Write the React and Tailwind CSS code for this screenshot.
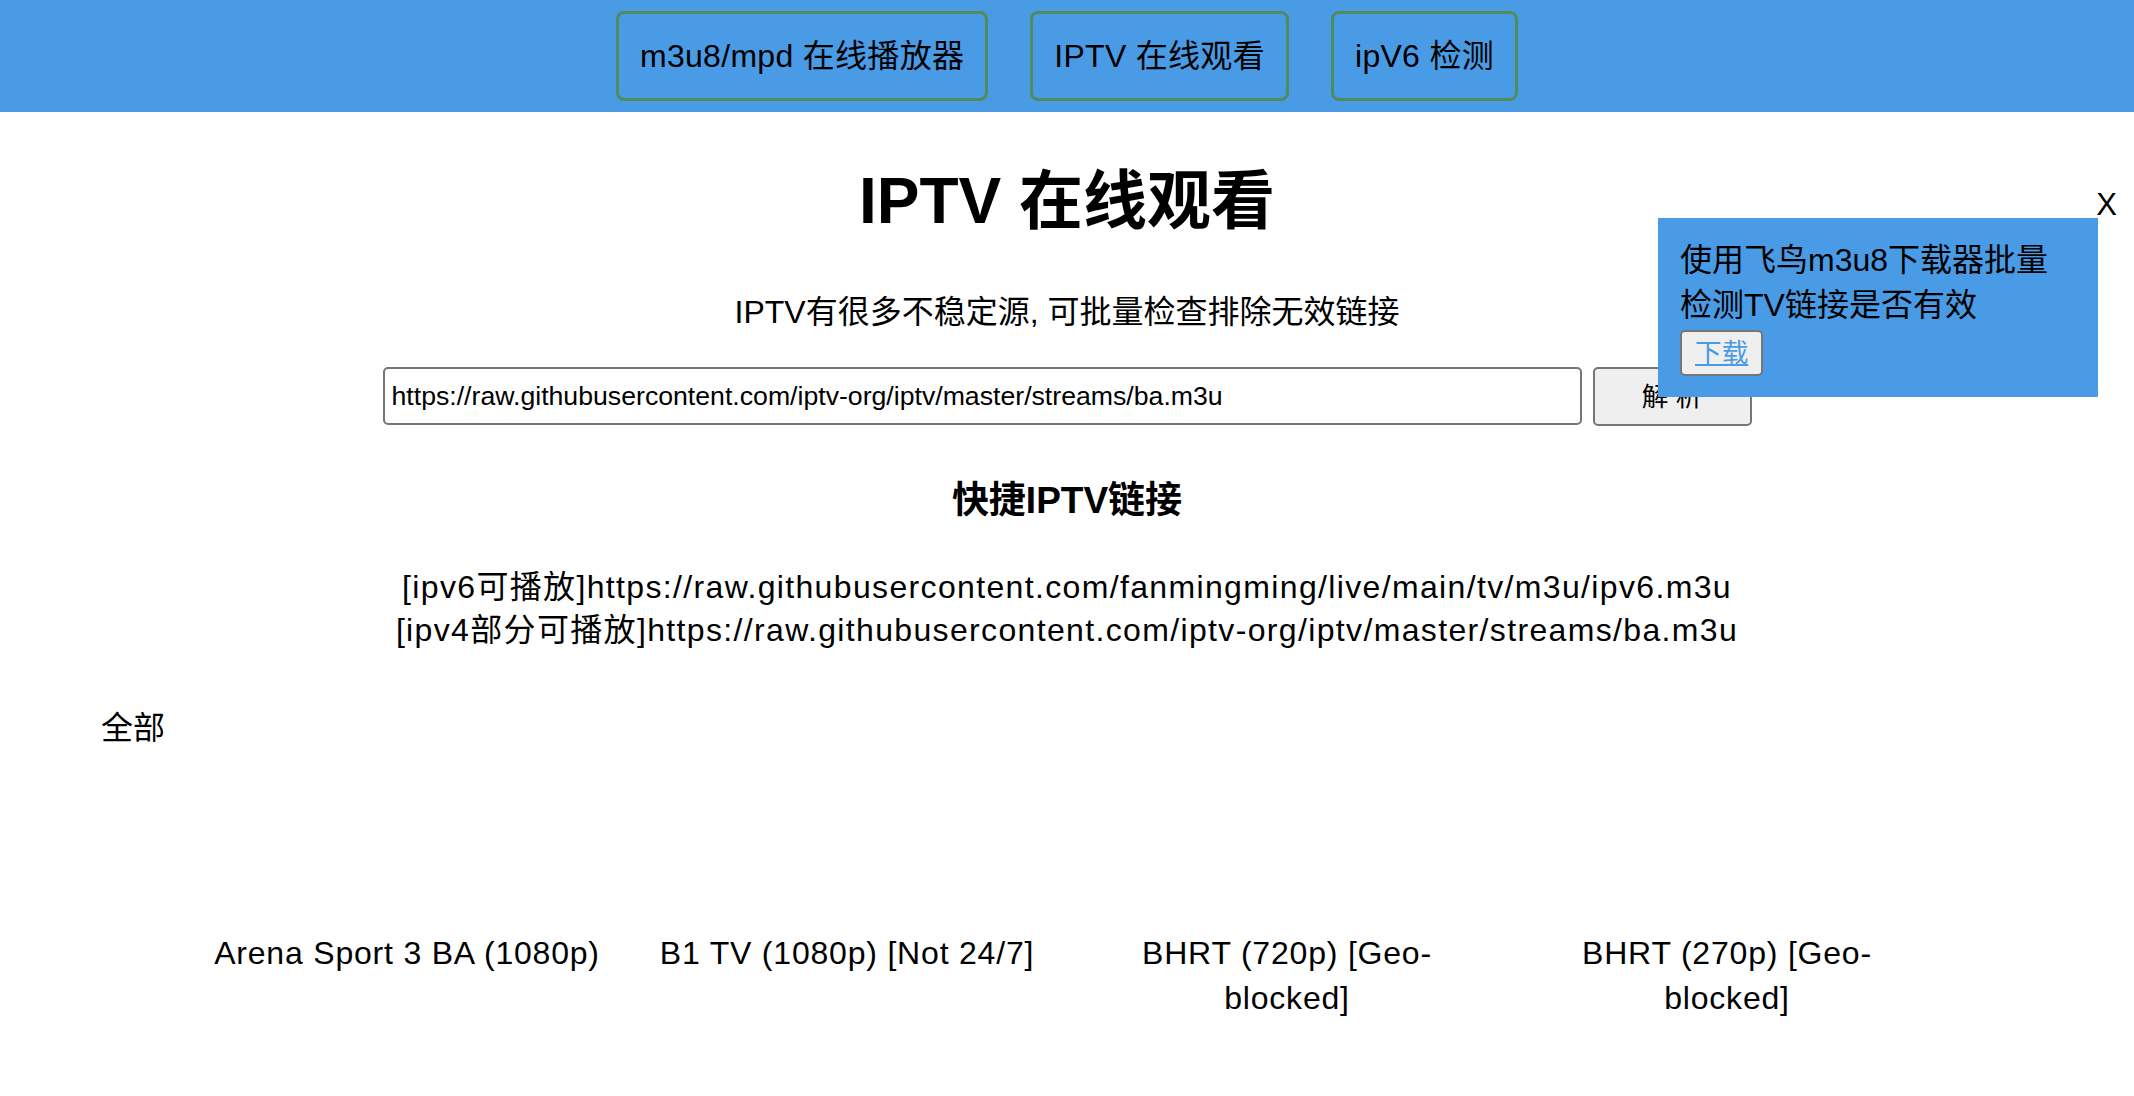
import React from 'react';

const navItems = ['m3u8/mpd 在线播放器', 'IPTV 在线观看', 'ipV6 检测'];

const quickLinks = [
    '[ipv6可播放]https://raw.githubusercontent.com/fanmingming/live/main/tv/m3u/ipv6.m3u',
    '[ipv4部分可播放]https://raw.githubusercontent.com/iptv-org/iptv/master/streams/ba.m3u',
];

const channels = [
    'Arena Sport 3 BA (1080p)',
    'B1 TV (1080p) [Not 24/7]',
    'BHRT (720p) [Geo-blocked]',
    'BHRT (270p) [Geo-blocked]',
];

export default function App() {
    return (
        <div className="relative min-h-[1096px] bg-white text-black font-['Liberation_Sans','Noto_Sans_CJK_SC',sans-serif]">
            {/* top nav */}
            <div className="h-[112px] bg-[#4a9be6] flex items-center justify-center gap-[42px]">
                {navItems.map((item) => (
                    <button key={item} className="h-[90px] px-[21px] border-[3px] border-[#518a5d] rounded-[8px] text-[32px] tracking-[0.3px] text-black">
                        {item}
                    </button>
                ))}
            </div>

            <div className="text-center">
                <h1 className="mt-[52px] text-[64px] font-bold leading-[74px]">IPTV 在线观看</h1>
                <p className="mt-[52px] text-[32px] leading-[45px]">IPTV有很多不稳定源, 可批量检查排除无效链接</p>

                <div className="mt-[32px] flex justify-center gap-[11px]">
                    <input
                        className="w-[1199px] h-[58px] border-2 border-[#767676] rounded-[5px] px-[7px] text-[26.67px] bg-white"
                        defaultValue="https://raw.githubusercontent.com/iptv-org/iptv/master/streams/ba.m3u"
                    />
                    <button className="w-[159px] h-[59px] bg-[#efefef] border-2 border-[#767676] rounded-[5px] text-[26.67px]">解 析</button>
                </div>

                <h3 className="mt-[52px] text-[37px] font-bold leading-[45px]">快捷IPTV链接</h3>
                <div className="mt-[43px] text-[32px] leading-[43px] tracking-[1.35px]">
                    {quickLinks.map((l) => (
                        <div key={l}>{l}</div>
                    ))}
                </div>

                <div className="mt-[54px] pl-[101px] text-left text-[32px] leading-[45px]">全部</div>

                <div className="mt-[180px] flex flex-wrap justify-center">
                    {channels.map((c) => (
                        <div key={c} className="w-[400px] mx-[20px] text-[32px] leading-[45px] tracking-[0.8px] text-center">
                            {c}
                        </div>
                    ))}
                </div>
            </div>

            {/* download tip */}
            <div className="absolute right-[17px] top-[189px] text-[31px] leading-none">X</div>
            <div className="absolute right-[36px] top-[218px] w-[440px] h-[179px] bg-[#4a9be6] px-[22px] pt-[20px] text-left">
                <div className="text-[32px] leading-[45px]">使用飞鸟m3u8下载器批量<br />检测TV链接是否有效</div>
                <button className="mt-[2px] h-[46px] px-[13px] bg-[#efefef] border-2 border-[#767676] rounded-[5px] text-[26.67px] leading-none">
                    <span className="text-[#4a9be6] underline">下载</span>
                </button>
            </div>
        </div>
    );
}
